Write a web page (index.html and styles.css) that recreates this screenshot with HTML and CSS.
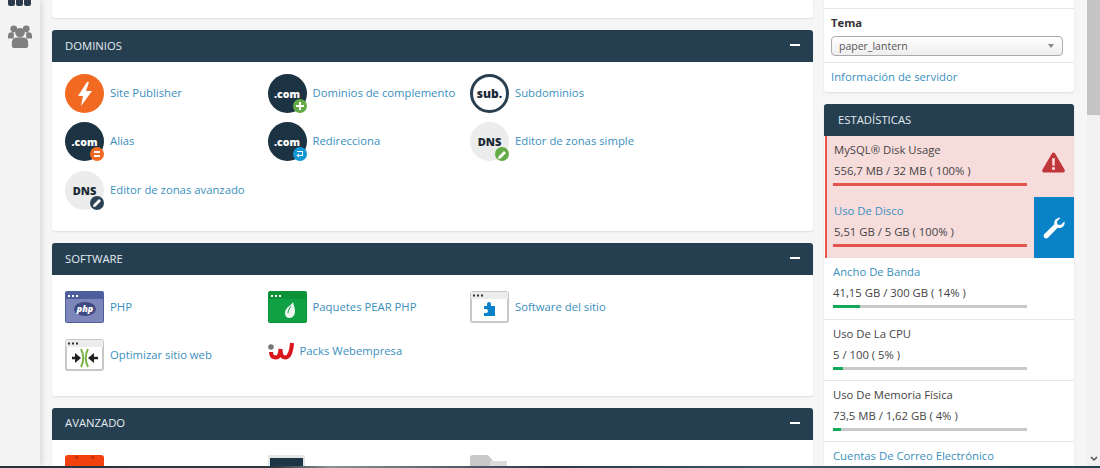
FILE: index.html
```html
<!DOCTYPE html>
<html>
	<head>
		<meta charset="UTF-8">
		<title>cPanel</title>
		<link rel="stylesheet" href="styles.css">
	</head>
	<body>
		<div class="view">
			<div class="rail">
				<div class="rail_dots"><i></i><i></i><i></i></div>
				<svg class="rail_users" width="24" height="23" viewBox="0 0 25 24">
					<circle cx="6" cy="4" r="3.6" fill="#808080"/>
					<circle cx="19" cy="4" r="3.6" fill="#808080"/>
					<path d="M0 11a3.5 3.5 0 0 1 3.5-3.5H6V14H0zM25 11a3.5 3.5 0 0 0-3.5-3.5H19V14h6z" fill="#808080"/>
					<circle cx="12.5" cy="8" r="5" fill="#808080"/>
					<path d="M4 18c0-3.500 3-5 5-5h7c2 0 5 1.500 5 5v3c0 2-1 3-3 3H7c-2 0-3-1-3-3z" fill="#808080"/>
				</svg>
			</div>
			<div class="content">
				<div class="left">
					<div class="panel panel_top"></div>

					<div class="panel">
						<div class="panel_head">DOMINIOS<span class="minus"></span></div>
						<div class="grid grid_dom">
							<a class="item">
								<span class="ico circle orange">
									<svg width="14" height="24" viewBox="0 0 14 24"><path d="M9 0L0 14h5l-2 10 11-15H8l3-9z" fill="#fff"/></svg>
								</span>
								<span class="item_txt">Site Publisher</span>
							</a>
							<a class="item">
								<span class="ico circle navy">.com<b class="badge green">
									<svg width="8" height="8" viewBox="0 0 8 8"><path d="M3 0h2v3h3v2H5v3H3V5H0V3h3z" fill="#fff"/></svg>
								</b></span>
								<span class="item_txt">Dominios de complemento</span>
							</a>
							<a class="item">
								<span class="ico circle ring">sub.</span>
								<span class="item_txt">Subdominios</span>
							</a>
							<a class="item">
								<span class="ico circle navy">.com<b class="badge red_orange">
									<svg width="8" height="8" viewBox="0 0 8 8"><path d="M1 1h6v2H1zM1 5h6v2H1z" fill="#fff"/></svg>
								</b></span>
								<span class="item_txt">Alias</span>
							</a>
							<a class="item">
								<span class="ico circle navy">.com<b class="badge blue">
									<svg width="8" height="8" viewBox="0 0 8 8"><path d="M1 1h6v5H3v1.500L.5 5.500 3 3.500V5h3V2H1z" fill="#fff"/></svg>
								</b></span>
								<span class="item_txt">Redirecciona</span>
							</a>
							<a class="item">
								<span class="ico circle gray">DNS<b class="badge green">
									<svg width="9" height="9" viewBox="0 0 9 9"><path d="M0 9l.6-2.600L6 1l2 2-5.400 5.400z" fill="#fff"/></svg>
								</b></span>
								<span class="item_txt">Editor de zonas simple</span>
							</a>
							<a class="item">
								<span class="ico circle gray">DNS<b class="badge slate">
									<svg width="9" height="9" viewBox="0 0 9 9"><path d="M0 9l.6-2.600L6 1l2 2-5.400 5.400z" fill="#fff"/></svg>
								</b></span>
								<span class="item_txt">Editor de zonas avanzado</span>
							</a>
						</div>
					</div>

					<div class="panel">
						<div class="panel_head">SOFTWARE<span class="minus"></span></div>
						<div class="grid">
							<a class="item">
								<span class="ico">
									<svg width="39" height="32" viewBox="0 0 39 32">
										<rect width="39" height="32" rx="2" fill="#4e5f9e"/>
										<rect x="1" y="8" width="37" height="23" fill="#7c86ba"/>
										<path d="M3 4h2v2H3zM7 4h2v2H7zM11 4h2v2h-2z" fill="#fff"/>
										<ellipse cx="20" cy="18" rx="11" ry="7" fill="#3f4a80"/>
										<text x="20" y="21" class="php_txt">php</text>
									</svg>
								</span>
								PHP
							</a>
							<a class="item">
								<span class="ico">
									<svg width="39" height="32" viewBox="0 0 39 32">
										<rect width="39" height="32" rx="2" fill="#0b9238"/>
										<rect x="1" y="8" width="37" height="23" fill="#0fa143"/>
										<path d="M3 4h2v2H3zM7 4h2v2H7zM11 4h2v2h-2z" fill="#fff"/>
										<path d="M25 11c-1 3-8 5-8 11 0 3 2 5 4.500 5 3.500 0 5.500-3 5.500-7 0-3-1-5-2-9z" fill="#eef8f0"/>
										<path d="M23 15c-1 2-3 4-3 7" stroke="#0fa143" fill="none"/>
									</svg>
								</span>
								Paquetes PEAR PHP
							</a>
							<a class="item">
								<span class="ico">
									<svg width="39" height="32" viewBox="0 0 39 32">
										<rect x="1" y="1" width="37" height="30" rx="2" fill="#fff" stroke="#c8c8c8" stroke-width="2"/>
										<rect x="1" y="1" width="37" height="7" fill="#ececec"/>
										<path d="M3 3.500h2v2H3zM7 3.500h2v2H7zM11 3.500h2v2h-2z" fill="#333"/>
										<path d="M14 15h3v-2a2 2 0 0 1 4 0v2h4v10H14v-3h2a2 2 0 0 0 0-4h-2z" fill="#0a82c8"/>
									</svg>
								</span>
								Software del sitio
							</a>
							<a class="item">
								<span class="ico">
									<svg width="39" height="32" viewBox="0 0 39 32">
										<rect x="1" y="1" width="37" height="30" rx="2" fill="#fff" stroke="#c8c8c8" stroke-width="2"/>
										<rect x="1" y="1" width="37" height="7" fill="#ececec"/>
										<path d="M3 3.500h2v2H3zM7 3.500h2v2H7zM11 3.500h2v2h-2z" fill="#333"/>
										<path d="M7 19h5M28 19h5" stroke="#222" stroke-width="2.500"/>
										<path d="M16 19l-6-5v10zM23 19l6-5v10z" fill="#222"/>
										<path d="M16 10c3 6 3 12 0 18M23 10c-3 6-3 12 0 18" stroke="#7ab648" stroke-width="2" fill="none"/>
									</svg>
								</span>
								Optimizar sitio web
							</a>
							<a class="item item_packs">
								<span class="ico_packs">
									<svg width="26" height="18" viewBox="0 0 26 18">
										<circle cx="3" cy="5" r="2.800" fill="#777"/>
										<path d="M3 10C3 15 6 15.500 8 15.500S12 14 12.500 7C12.500 14 15 15.500 17 15.500 22 15.500 23.500 8 24 1" stroke="#d8161b" stroke-width="4" fill="none"/>
									</svg>
								</span>
								Packs Webempresa
							</a>
						</div>
					</div>

					<div class="panel">
						<div class="panel_head">AVANZADO<span class="minus"></span></div>
						<div class="grid">
							<a class="item">
								<span class="ico">
									<svg width="39" height="32" viewBox="0 0 39 32">
										<rect width="39" height="32" rx="3" fill="#f2410f"/>
										<path d="M10 1h3v3h-3zM26 1h3v3h-3z" fill="#c93208"/>
									</svg>
								</span>
							</a>
							<a class="item">
								<span class="ico">
									<svg width="39" height="32" viewBox="0 0 39 32">
										<rect width="37" height="32" rx="1" fill="#e6e6e6"/>
										<rect x="2" y="3" width="33" height="28" fill="#1d3646"/>
									</svg>
								</span>
							</a>
							<a class="item">
								<span class="ico">
									<svg width="39" height="32" viewBox="0 0 39 32">
										<path d="M0 3a3 3 0 0 1 3-3h15l5 6h14v26H0z" fill="#c9c9c9"/>
										<rect x="20" y="6" width="17" height="26" fill="#dcdcdc"/>
									</svg>
								</span>
							</a>
						</div>
					</div>
				</div>

				<div class="right">
					<div class="panel info">
						<div class="info_blank"></div>
						<div class="info_theme">
							<label class="theme_label">Tema</label>
							<div class="select">paper_lantern<span class="caret"></span></div>
						</div>
						<a class="info_link">Información de servidor</a>
					</div>

					<div class="panel stats">
						<div class="panel_head stats_head">ESTADÍSTICAS</div>

						<div class="stat stat_red">
							<div class="stat_body">
								<div class="stat_name">MySQL® Disk Usage</div>
								<div class="stat_val">556,7 MB / 32 MB ( 100% )</div>
								<div class="bar"><i class="fill_red" style="width:100%"></i></div>
							</div>
							<div class="stat_warn">
								<svg width="23" height="22" viewBox="0 0 24 22">
									<path d="M12 1a2 2 0 0 1 1.700 1L23.600 19a2 2 0 0 1-1.700 3H2.100a2 2 0 0 1-1.700-3L10.300 2A2 2 0 0 1 12 1z" fill="#c0373b"/>
									<path d="M10.500 7h3l-.4 8h-2.200zM10.500 16.500h3V19h-3z" fill="#f7dcdc"/>
								</svg>
							</div>
						</div>

						<div class="stat stat_red">
							<div class="stat_body">
								<a class="stat_name stat_link">Uso De Disco</a>
								<div class="stat_val">5,51 GB / 5 GB ( 100% )</div>
								<div class="bar"><i class="fill_red" style="width:100%"></i></div>
							</div>
							<div class="stat_fix">
								<svg width="22" height="22" viewBox="0 0 22 22">
									<path d="M21.500 4.500c.8 3-1.500 6.500-5 6.500-.8 0-1.300-.1-1.900-.3L5 20.700c-1 1-2.600 1-3.600 0s-1-2.600 0-3.600L11.400 7.200C10.600 3.700 13.500 .5 17.500 .8l-3.600 3.600.5 3.200 3.200.5z" fill="#fff"/>
								</svg>
							</div>
						</div>

						<div class="stat stat_tall">
							<div class="stat_body">
								<a class="stat_name stat_link">Ancho De Banda</a>
								<div class="stat_val">41,15 GB / 300 GB ( 14% )</div>
								<div class="bar"><i class="fill_green" style="width:14%"></i></div>
							</div>
						</div>

						<div class="stat">
							<div class="stat_body">
								<div class="stat_name">Uso De La CPU</div>
								<div class="stat_val">5 / 100 ( 5% )</div>
								<div class="bar"><i class="fill_green" style="width:5%"></i></div>
							</div>
						</div>

						<div class="stat">
							<div class="stat_body">
								<div class="stat_name">Uso De Memoria Física</div>
								<div class="stat_val">73,5 MB / 1,62 GB ( 4% )</div>
								<div class="bar"><i class="fill_green" style="width:4%"></i></div>
							</div>
						</div>

						<div class="stat">
							<div class="stat_body">
								<a class="stat_name stat_link">Cuentas De Correo Electrónico</a>
							</div>
						</div>
					</div>
				</div>
			</div>
			<div class="sbar_track">
				<div class="sbar_thumb"></div>
				<svg class="sbar_arrow" width="8" height="6" viewBox="0 0 8 6"><path d="M1 1l3 3 3-3" stroke="#505050" stroke-width="1.500" fill="none"/></svg>
			</div>
		</div>
		<div class="strip"></div>
	</body>
</html>
```

FILE: styles.css
```css
*{
	padding: 0;
	margin: 0;
	box-sizing: border-box;
}
html,body{
	height: 468px;
	overflow: hidden;
}
body{
	font-family: "Open Sans", "Liberation Sans", sans-serif;
	font-size: 11.3px;
	color: #444;
	background: #f6f6f6;
}
.view{
	display: flex;
	height: 466px;
	overflow: hidden;
}
.strip{
	height: 2px;
	background: linear-gradient(90deg, #26323a 0, #2c3a42 25%, #8a9298 30%, #2b3a44 50%, #3d5660 70%, #24404c 100%);
}

/* left rail */
.rail{
	width: 40px;
	flex-shrink: 0;
	background: #f4f4f4;
	box-shadow: 2px 0 6px rgba(0,0,0,.12);
	padding-left: 8px;
}
.rail_dots{
	display: flex;
	gap: 1px;
	height: 6px;
}
.rail_dots>i{
	width: 7px;
	height: 6px;
	border-radius: 0 0 2px 2px;
	background: #2b3a4d;
}
.rail_users{
	display: block;
	margin-top: 19px;
}

/* columns */
.content{
	flex: 1;
	display: flex;
	gap: 11px;
	padding-left: 12px;
	padding-right: 13px;
	min-width: 0;
}
.left{
	width: 761px;
}
.right{
	width: 250px;
}
.panel{
	background: #fff;
	border-radius: 3px;
	box-shadow: 0 1px 2px rgba(0,0,0,.1);
	margin-bottom: 12px;
}
.panel_top{
	height: 18px;
}
.panel_head{
	display: flex;
	align-items: center;
	justify-content: space-between;
	height: 32px;
	padding: 0 13px 2px;
	border-radius: 3px 3px 0 0;
	color: #e3ecf1;
	background: #263f50;
}
.minus{
	width: 10px;
	height: 2px;
	background: #fff;
}

/* icon lists */
.grid{
	display: grid;
	grid-template-columns: repeat(3, 202.5px);
	grid-auto-rows: 39px;
	row-gap: 9.33px;
	padding: 12px 13px 21.4px;
}
.item{
	display: flex;
	align-items: center;
	gap: 6px;
	color: #3a8fbd;
	white-space: nowrap;
}
.grid_dom .item_txt{
	margin-bottom: 2px;
}
.item_packs{
	height: 31px;
	align-self: start;
}
.ico{
	position: relative;
	display: flex;
	align-items: center;
	justify-content: center;
	width: 39px;
	height: 39px;
	flex-shrink: 0;
}
.ico_packs{
	display: flex;
	width: 26px;
	height: 18px;
}
.circle{
	border-radius: 50%;
	font-weight: 800;
	font-size: 10.5px;
}
.orange{
	background: #f26a21;
}
.navy{
	color: #fff;
	background: #1b3342;
}
.gray{
	color: #1b2a36;
	font-size: 11px;
	background: #ececec;
}
.ring{
	color: #1b2a36;
	font-size: 12px;
	background: #fff;
	border: 3px solid #2a3f4f;
}
.badge{
	position: absolute;
	right: 0;
	bottom: 0;
	display: flex;
	align-items: center;
	justify-content: center;
	width: 14px;
	height: 14px;
	border-radius: 50%;
}
.green{
	background: #62ab47;
}
.red_orange{
	background: #f26a21;
}
.blue{
	background: #1196d6;
}
.slate{
	background: #2a4254;
}
.php_txt{
	font-family: "Open Sans", sans-serif;
	font-size: 9px;
	font-weight: 800;
	font-style: italic;
	fill: #fff;
	text-anchor: middle;
}

/* right column */
.info_blank{
	height: 9px;
	border-bottom: 1px solid #e6e6e6;
}
.info_theme{
	height: 54px;
	padding: 8px 7px 0;
	border-bottom: 1px solid #e6e6e6;
}
.theme_label{
	display: block;
	height: 19px;
	line-height: 12px;
	font-weight: 700;
	color: #333;
}
.select{
	position: relative;
	width: 232px;
	height: 20px;
	line-height: 18px;
	padding-left: 7px;
	font-size: 10.5px;
	color: #555;
	border: 1px solid #aaa;
	border-radius: 4px;
	background: linear-gradient(#fff, #eee);
}
.caret{
	position: absolute;
	top: 7px;
	right: 8px;
	border: 3px solid transparent;
	border-top: 4px solid #888;
}
.info_link{
	display: block;
	height: 29px;
	line-height: 27px;
	padding-left: 7px;
	color: #3a8fbd;
}
.stats_head{
	padding: 0 14px 2px;
}
.stat{
	display: flex;
	height: 61px;
	border-bottom: 1px solid #e6e6e6;
}
.stat_tall{
	height: 62px;
}
.stat_red{
	margin-left: 1px;
	border-left: 2px solid #e4554d;
	border-bottom: none;
	background: #f7dcdc;
}
.stat_body{
	flex: 1;
	padding: 6px 0 0 9px;
}
.stat_red>.stat_body{
	padding-left: 6px;
}
.stat_red .stat_name,
.stat_red .stat_val{
	padding-left: 1px;
}
.stat_name{
	display: block;
	height: 21px;
	line-height: 16px;
	color: #444;
}
.stat_link{
	color: #3a8fbd;
}
.stat_val{
	height: 20px;
	line-height: 15px;
	color: #444;
}
.bar{
	width: 194px;
	height: 3px;
	background: #c9c9c9;
}
.bar>i{
	display: block;
	height: 3px;
}
.fill_red{
	background: #e4554d;
}
.fill_green{
	background: #0fa958;
}
.stat_warn{
	display: flex;
	align-items: center;
	justify-content: center;
	width: 41px;
	padding-bottom: 9px;
}
.stat_fix{
	display: flex;
	align-items: center;
	justify-content: center;
	width: 40px;
	background: #0a82c8;
}

/* scrollbar */
.sbar_track{
	position: relative;
	width: 13px;
	flex-shrink: 0;
	background: #f1f1f1;
}
.sbar_thumb{
	height: 115px;
	background: #c4c4c4;
}
.sbar_arrow{
	position: absolute;
	left: 3px;
	bottom: 4px;
}
```
